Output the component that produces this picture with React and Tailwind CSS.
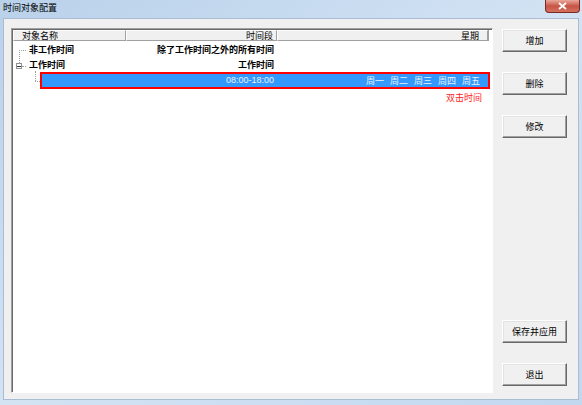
const font = { fontFamily: '"Noto Sans CJK SC", "Liberation Sans", sans-serif' };

const WinButton = ({ children }) => (
  <button className="w-[65px] h-[23px] bg-[#f0f0f0] border border-t-white border-l-white border-r-[#696969] border-b-[#696969] shadow-[inset_-1px_-1px_0_#a0a0a0,inset_1px_1px_0_#e3e3e3] text-[9px] text-black leading-none">
    {children}
  </button>
);

const App = () => {
  return (
    <div
      className="w-[582px] h-[405px] flex flex-col bg-gradient-to-br from-[#b9d1ea] via-[#d3e3f4] to-[#c2d8ef] overflow-hidden"
      style={font}
    >
      {/* title bar */}
      <div className="h-[18px] flex items-start justify-between pl-[3px]">
        <span className="text-[9px] leading-[16px] text-black">时间对象配置</span>
        <div className="mr-[2px] w-[35px] h-[13px] rounded-b-[4px] border border-t-0 border-[#7a2a22] bg-gradient-to-b from-[#e8a99b] via-[#c75446] to-[#d4705e] flex items-center justify-center">
          <svg width="9" height="8" viewBox="0 0 9 8">
            <path d="M1 1 L8 7 M8 1 L1 7" stroke="#fff" strokeWidth="1.8" />
          </svg>
        </div>
      </div>

      {/* dialog body */}
      <div className="flex-1 mx-[3px] mb-[5px] bg-[#f0f0f0] border border-[#a9bcd4] flex pl-[7px] pt-[9px] pb-[6px] pr-[11px]">
        {/* list panel */}
        <div className="w-[482px] h-full bg-white border-t-[1px] border-l-[1px] border-t-[#a0a0a0] border-l-[#a0a0a0] border-r border-b border-r-white border-b-white shadow-[inset_1px_1px_0_#696969] pl-[1px] pt-[1px]">
          {/* header */}
          <div className="flex h-[11px] text-[9px] leading-[10px] text-black">
            <div className="w-[113px] border border-[#a0a0a0] border-t-white border-l-white bg-[#f0f0f0] pl-[8px]">对象名称</div>
            <div className="w-[151px] border border-[#a0a0a0] border-t-white border-l-white bg-[#f0f0f0] text-right pr-[3px]">时间段</div>
            <div className="w-[211px] border border-[#a0a0a0] border-t-white border-l-white bg-[#f0f0f0] text-right pr-[8px]">星期</div>
            <div className="flex-1 border-l border-[#a0a0a0]"></div>
          </div>

          {/* rows */}
          <div className="relative text-[9px] leading-[15px] font-bold text-black">
            {/* tree lines */}
            <div className="absolute left-[6px] top-[8px] w-[7px] border-t border-dotted border-[#a0a0a0]"></div>
            <div className="absolute left-[6px] top-[8px] h-[13px] border-l border-dotted border-[#a0a0a0]"></div>
            <div className="absolute left-[3px] top-[21px] w-[6px] h-[6px] border border-[#919191] bg-white flex items-center justify-center">
              <div className="w-[4px] border-t border-[#333]"></div>
            </div>
            <div className="absolute left-[9px] top-[24px] w-[4px] border-t border-dotted border-[#a0a0a0]"></div>
            <div className="absolute left-[22px] top-[29px] h-[10px] border-l border-dotted border-[#a0a0a0]"></div>
            <div className="absolute left-[22px] top-[39px] w-[5px] border-t border-dotted border-[#a0a0a0]"></div>

            <div className="flex h-[15px] mt-[1px]">
              <div className="w-[113px] pl-[16px]">非工作时间</div>
              <div className="w-[148px] text-right">除了工作时间之外的所有时间</div>
            </div>
            <div className="flex h-[15px]">
              <div className="w-[113px] pl-[16px]">工作时间</div>
              <div className="w-[148px] text-right">工作时间</div>
            </div>
            <div className="ml-[27px] mr-[2px] h-[17px] border-2 border-[#ff0000] bg-[#3399ff] flex items-center font-normal text-[#eaf4ff] leading-none">
              <div className="w-[232px] text-right" style={{ fontFamily: '"Liberation Sans", "Noto Sans CJK SC", sans-serif' }}>08:00-18:00</div>
              <div className="flex-1 flex justify-end gap-[6px] pr-[8px]">
                <span>周一</span>
                <span>周二</span>
                <span>周三</span>
                <span>周四</span>
                <span>周五</span>
              </div>
            </div>
            <div className="flex justify-end pr-[10px] pt-[3px] font-normal text-[#ff2020] leading-[12px]">双击时间</div>
          </div>
        </div>

        {/* buttons */}
        <div className="flex-1 flex flex-col items-end pt-[1px] pb-[7px]">
          <div className="flex flex-col gap-[20px]">
            <WinButton>增加</WinButton>
            <WinButton>删除</WinButton>
            <WinButton>修改</WinButton>
          </div>
          <div className="mt-auto flex flex-col gap-[20px]">
            <WinButton>保存并应用</WinButton>
            <WinButton>退出</WinButton>
          </div>
        </div>
      </div>
    </div>
  );
};

export default App;
